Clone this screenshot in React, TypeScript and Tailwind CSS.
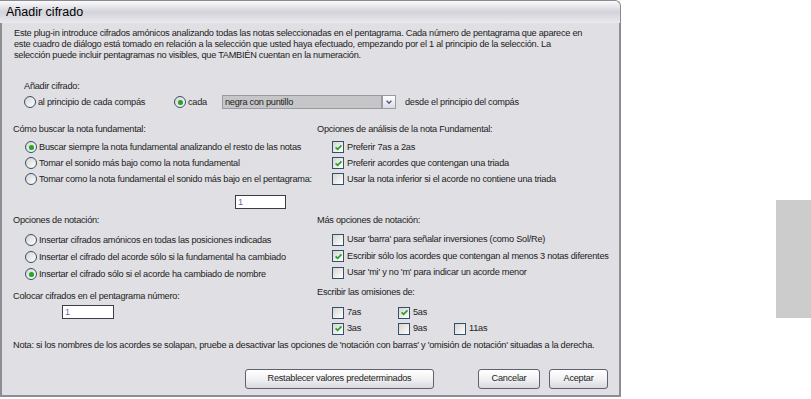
import React from "react";

const T = "text-[9.2px] tracking-[-0.25px] text-[#1c1c1c] leading-[11px] whitespace-nowrap";

function Radio({ on }: { on?: boolean }) {
  return (
    <span className="w-[12px] h-[12px] rounded-full border border-[#34506e] bg-gradient-to-br from-[#d6d5d0] to-white flex items-center justify-center shrink-0">
      {on && <span className="w-[5px] h-[5px] rounded-full bg-[#2da42d] shadow-[0_0_1px_#7fd07f]" />}
    </span>
  );
}

function Check({ on }: { on?: boolean }) {
  return (
    <span className="w-[12px] h-[12px] border border-[#34506e] bg-gradient-to-br from-[#d6d5d0] to-white flex items-center justify-center shrink-0">
      {on && (
        <svg viewBox="0 0 10 10" className="w-[9px] h-[9px]">
          <path d="M1.8 4.8 L4 7 L8.3 2.6" stroke="#22a122" strokeWidth="1.8" fill="none" />
        </svg>
      )}
    </span>
  );
}

function RRow({ on, children, h = "h-[16px]" }: { on?: boolean; children: React.ReactNode; h?: string }) {
  return (
    <div className={`flex items-center gap-[2px] ${h}`}>
      <Radio on={on} />
      <span className={T}>{children}</span>
    </div>
  );
}

function CRow({ on, children, h = "h-[16px]" }: { on?: boolean; children: React.ReactNode; h?: string }) {
  return (
    <div className={`flex items-center gap-[3px] ${h}`}>
      <Check on={on} />
      <span className={T}>{children}</span>
    </div>
  );
}

function Input({ w }: { w: string }) {
  return (
    <div className={`${w} h-[14px] bg-white border border-[#3c3c44] flex items-center pl-[2px]`}>
      <span className="text-[9.2px] leading-[11px] text-[#7b5fa6]">1</span>
    </div>
  );
}

function Btn({ w, children }: { w: string; children: React.ReactNode }) {
  return (
    <div className={`${w} h-[20px] rounded-[3px] border border-[#5f6070] bg-gradient-to-b from-white via-[#f2f2f4] to-[#d8d8de] flex items-center justify-center`}>
      <span className={T}>{children}</span>
    </div>
  );
}

export default function App() {
  return (
    <div className="w-[811px] h-[399px] bg-white flex items-start overflow-hidden font-['Liberation_Sans',Arial,sans-serif]">
      <div className="w-[621px] h-[397px] flex flex-col shrink-0">
        <div className="h-[23px] shrink-0 rounded-tr-[6px] border-t border-r border-[#8a8a92] bg-gradient-to-b from-[#fbfbfc] via-[#d3d3db] to-[#e9e9ee] flex items-center pl-[6px]">
          <span className="text-[12.5px] text-black leading-none">Añadir cifrado</span>
        </div>
        <div className="flex-1 bg-[#e0dfe3] border-l-2 border-r-2 border-b-2 border-[#8d8d94] pl-[11px] pr-[10px] flex flex-col">
          <p className={`${T} pt-[4.5px] pl-[1px]`}>
            Este plug-in introduce cifrados amónicos analizando todas las notas seleccionadas en el pentagrama. Cada número de pentagrama que aparece en
            <br />
            este cuadro de diálogo está tomado en relación a la selección que usted haya efectuado, empezando por el 1 al principio de la selección. La
            <br />
            selección puede incluir pentagramas no visibles, que TAMBIÉN cuentan en la numeración.
          </p>

          <div className="pl-[11px] mt-[20px]">
            <div className={T}>Añadir cifrado:</div>
            <div className="flex items-center h-[14px] mt-[3.5px]">
              <div className="flex items-center gap-[2px] w-[150px]">
                <Radio />
                <span className={T}>al principio de cada compás</span>
              </div>
              <div className="flex items-center gap-[2px] w-[48px]">
                <Radio on />
                <span className={T}>cada</span>
              </div>
              <div className="w-[160px] h-[14px] bg-[#c6c6c9] border border-[#9a9aa2] flex items-center pl-[2px]">
                <span className={T}>negra con puntillo</span>
              </div>
              <div className="w-[14px] h-[14px] border border-[#9a9aa2] bg-gradient-to-b from-white to-[#dcdce6] flex items-center justify-center">
                <svg viewBox="0 0 10 10" className="w-[8px] h-[8px]">
                  <path d="M2 3.5 L5 6.5 L8 3.5" stroke="#4b5e86" strokeWidth="1.8" fill="none" />
                </svg>
              </div>
              <span className={`${T} ml-[9px]`}>desde el principio del compás</span>
            </div>
          </div>

          <div className="grid grid-cols-[304px_1fr] mt-[14.5px]">
            <div className="flex flex-col">
              <div className={T}>Cómo buscar la nota fundamental:</div>
              <div className="pl-[12px] mt-[4.5px] flex flex-col">
                <RRow on>Buscar siempre la nota fundamental analizando el resto de las notas</RRow>
                <RRow>Tomar el sonido más bajo como la nota fundamental</RRow>
                <RRow>Tomar como la nota fundamental el sonido más bajo en el pentagrama:</RRow>
              </div>
              <div className="pl-[222px] mt-[8px]">
                <Input w="w-[51px]" />
              </div>
            </div>
            <div className="flex flex-col">
              <div className={T}>Opciones de análisis de la nota Fundamental:</div>
              <div className="pl-[15px] mt-[4.5px] flex flex-col">
                <CRow on>Preferir 7as a 2as</CRow>
                <CRow on>Preferir acordes que contengan una triada</CRow>
                <CRow>Usar la nota inferior si el acorde no contiene una triada</CRow>
              </div>
            </div>
          </div>

          <div className="grid grid-cols-[304px_1fr] mt-[5.5px]">
            <div className="flex flex-col">
              <div className={T}>Opciones de notación:</div>
              <div className="pl-[12px] mt-[6px] flex flex-col">
                <RRow h="h-[17px]">Insertar cifrados amónicos en todas las posiciones indicadas</RRow>
                <RRow h="h-[17px]">Insertar el cifrado del acorde sólo si la fundamental ha cambiado</RRow>
                <RRow h="h-[17px]" on>Insertar el cifrado sólo si el acorde ha cambiado de nombre</RRow>
              </div>
              <div className={`${T} mt-[8px]`}>Colocar cifrados en el pentagrama número:</div>
              <div className="pl-[49px] mt-[3.5px]">
                <Input w="w-[52px]" />
              </div>
            </div>
            <div className="flex flex-col">
              <div className={T}>Más opciones de notación:</div>
              <div className="pl-[15px] mt-[6px] flex flex-col">
                <CRow h="h-[16.5px]">Usar 'barra' para señalar inversiones (como Sol/Re)</CRow>
                <CRow h="h-[16.5px]" on>Escribir sólo los acordes que contengan al menos 3 notas diferentes</CRow>
                <CRow h="h-[16.5px]">Usar 'mi' y no 'm' para indicar un acorde menor</CRow>
              </div>
              <div className={`${T} mt-[6px]`}>Escribir las omisiones de:</div>
              <div className="pl-[15px] mt-[6.5px] grid grid-cols-[66px_56px_60px]">
                <CRow>7as</CRow>
                <CRow on>5as</CRow>
                <div />
                <CRow on>3as</CRow>
                <CRow>9as</CRow>
                <CRow>11as</CRow>
              </div>
            </div>
          </div>

          <div className={`${T} mt-[3.5px]`}>
            Nota: si los nombres de los acordes se solapan, pruebe a desactivar las opciones de 'notación con barras' y 'omisión de notación' situadas a la derecha.
          </div>

          <div className="flex justify-end mt-[17.5px] pr-[1px]">
            <Btn w="w-[189px]">Restablecer valores predeterminados</Btn>
            <div className="w-[44px]" />
            <Btn w="w-[62px]">Cancelar</Btn>
            <div className="w-[9px]" />
            <Btn w="w-[59px]">Aceptar</Btn>
          </div>
        </div>
      </div>
      <div className="ml-auto mt-[200px] w-[35px] h-[118px] bg-[#cccccc]" />
    </div>
  );
}
